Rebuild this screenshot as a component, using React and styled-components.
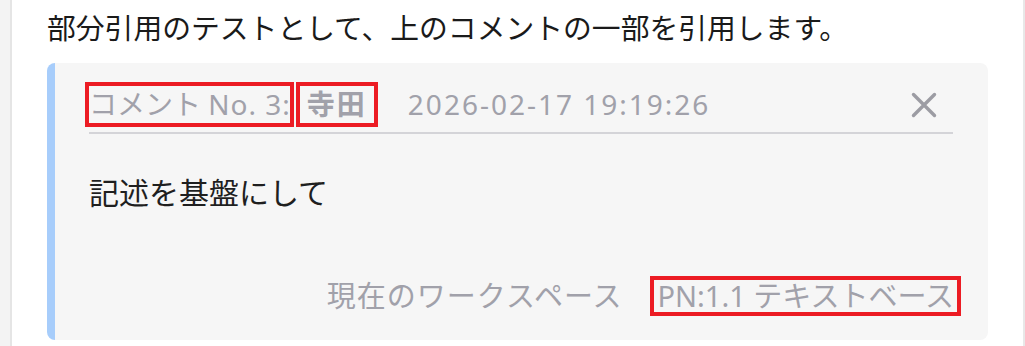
import styled, { createGlobalStyle } from 'styled-components';

const GlobalStyle = createGlobalStyle`
  body {
    margin: 0;
    background: #ffffff;
    font-family: "Noto Sans", "Noto Sans CJK JP", sans-serif;
  }
`;

const Page = styled.div`
  display: flex;
  width: 1025px;
  height: 346px;
  overflow: hidden;
`;

const SideStrip = styled.div`
  width: 10px;
  flex-shrink: 0;
  background: #f3f3f3;
  border-right: 2px solid #e5e5e5;
`;

const Main = styled.div`
  flex: 1;
  padding: 8px 0 0 35px;
  border-right: 2px solid #e8e8e8;
`;

const Lead = styled.p`
  margin: 0;
  font-size: 28.8px;
  line-height: 40px;
  color: #1a1a1a;
  white-space: nowrap;
`;

const Quote = styled.div`
  margin-top: 15px;
  background: #f6f6f6;
  border-left: 8px solid #a7cdfb;
  border-radius: 8px;
  padding: 23px 35px 28px 34px;
  box-sizing: content-box;
  width: 864px;
`;

const Header = styled.div`
  display: flex;
  align-items: center;
  padding-bottom: 9px;
  border-bottom: 2px solid #d4d4d8;
  color: #a1a1aa;
  font-size: 28px;
  line-height: 37px;
  white-space: nowrap;
`;

const Marked = styled.span`
  outline: 4px solid #ec1c24;
  padding: 0 ${(p) => p.$pad || 0}px;
  font-weight: ${(p) => (p.$bold ? 700 : 400)};
  letter-spacing: ${(p) => (p.$bold ? '2px' : 'normal')};
`;

const Latin = styled.span`
  letter-spacing: ${(p) => p.$spacing ?? 2}px;
`;

const Name = styled(Marked)`
  margin-left: 10px;
`;

const Stamp = styled(Latin)`
  margin-left: 34px;
`;

const Close = styled.button`
  margin-left: auto;
  margin-right: 16px;
  padding: 0;
  border: none;
  background: transparent;
  display: flex;
  cursor: pointer;
`;

const Body = styled.div`
  margin-top: 39px;
  font-size: 30px;
  line-height: 40px;
  color: #1f1f1f;
`;

const Footer = styled.div`
  margin-top: 67px;
  margin-right: -4px;
  display: flex;
  justify-content: flex-end;
  align-items: center;
  gap: 32px;
  font-size: 29px;
  line-height: 32px;
  color: #a1a1aa;
  white-space: nowrap;
`;

const Workspace = styled.span`
  letter-spacing: 1px;
`;

const XIcon = () => (
  <svg width="26" height="26" viewBox="0 0 26 26">
    <path d="M2.5 2.5 L23.5 23.5 M23.5 2.5 L2.5 23.5" stroke="#9c9ca3" strokeWidth="3.4" strokeLinecap="round" />
  </svg>
);

export default function App() {
  return (
    <Page>
      <GlobalStyle />
      <SideStrip />
      <Main>
        <Lead>部分引用のテストとして、上のコメントの一部を引用します。</Lead>
        <Quote>
          <Header>
            <Marked>
              コメント <Latin $spacing={1}>No. 3</Latin>:
            </Marked>
            <Name $bold $pad={7}>寺田</Name>
            <Stamp $spacing={2}>2026-02-17 19:19:26</Stamp>
            <Close aria-label="閉じる">
              <XIcon />
            </Close>
          </Header>
          <Body>記述を基盤にして</Body>
          <Footer>
            <Workspace>現在のワークスペース</Workspace>
            <Marked $pad={3}>PN:1.1 テキストベース</Marked>
          </Footer>
        </Quote>
      </Main>
    </Page>
  );
}
